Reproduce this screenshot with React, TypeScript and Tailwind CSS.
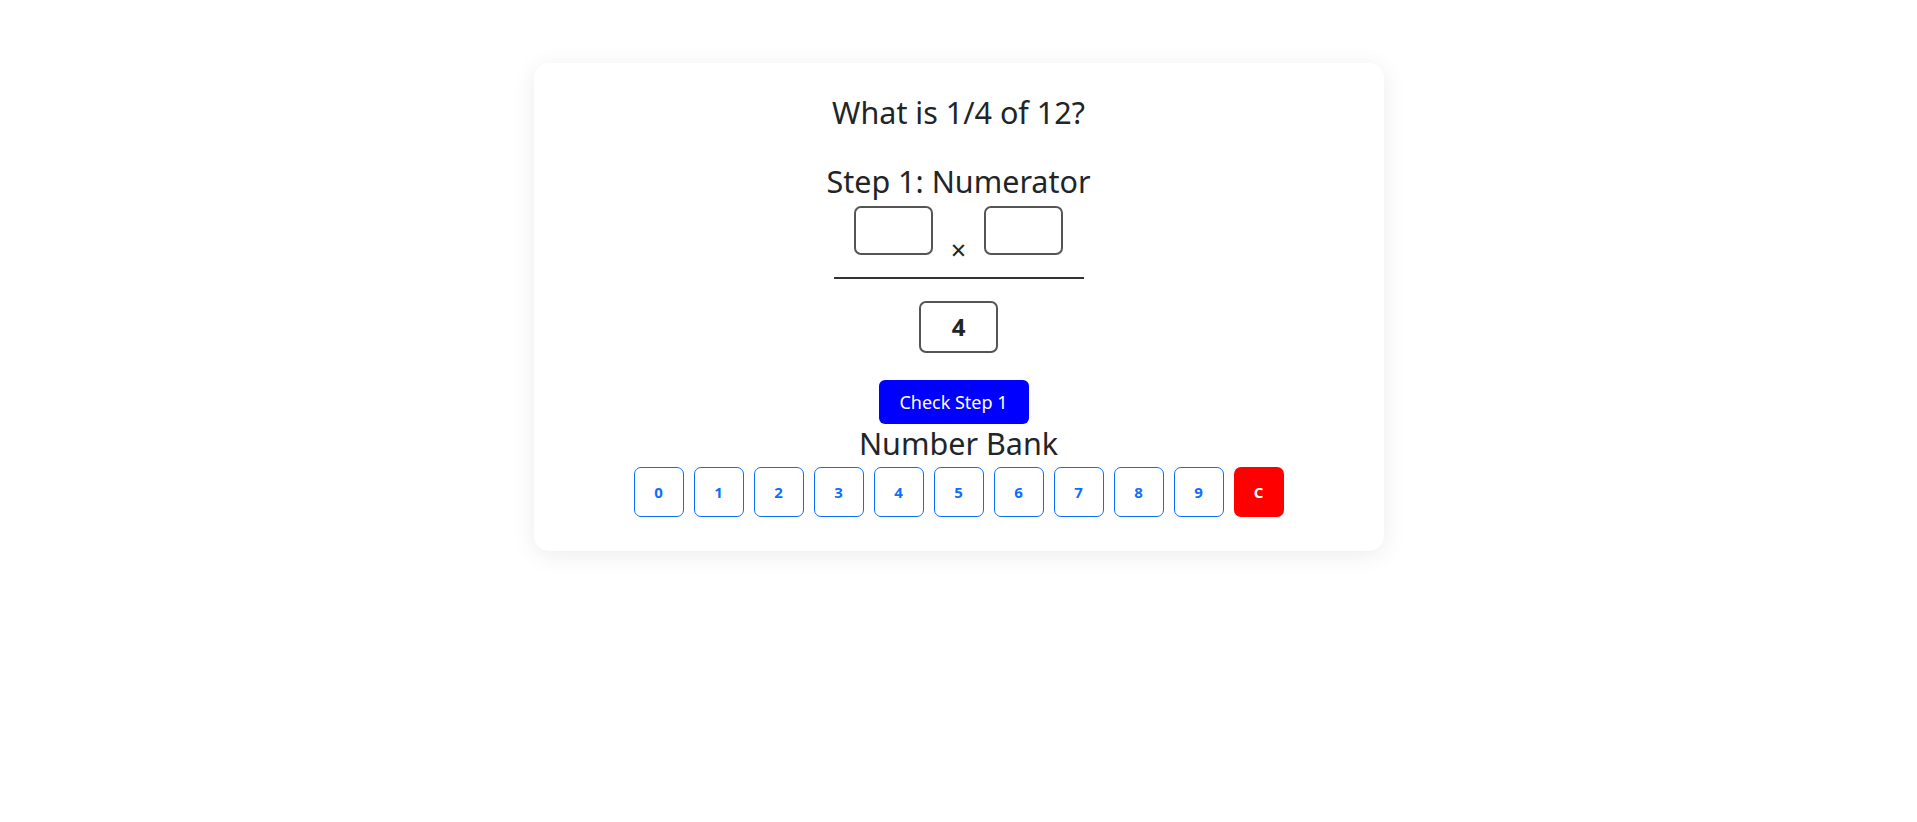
const DIGITS = ["0", "1", "2", "3", "4", "5", "6", "7", "8", "9"];

function AnswerBox({ value, tall }: { value?: string; tall?: boolean }) {
  return (
    <div
      className={`flex w-[79px] items-center justify-center rounded-[7px] border-2 border-[#555] bg-white text-[24px] font-bold text-[#212529] ${
        tall ? "h-[52px]" : "h-[49px]"
      }`}
    >
      {value}
    </div>
  );
}

export default function App() {
  return (
    <div
      className="min-h-screen bg-white pt-[63px] text-[#212529]"
      style={{ fontFamily: '"Segoe UI", "Noto Sans", "Open Sans", sans-serif' }}
    >
      <div className="mx-auto flex w-[850px] flex-col items-center rounded-[15px] bg-white pt-[30px] pb-[34px] shadow-[0_4px_24px_rgba(0,0,0,0.08)]">
        <h2 className="text-[30.5px] leading-[38px]">What is 1/4 of 12?</h2>
        <h2 className="mt-[31px] text-[30.5px] leading-[38px]">Step 1: Numerator</h2>

        <div className="mt-[6px] flex items-end">
          <AnswerBox />
          <span className="mx-[18px] -mb-[8px] text-[27px] leading-none">×</span>
          <AnswerBox />
        </div>
        <div className="mt-[22px] h-[2px] w-[250px] bg-[#333]" />
        <div className="mt-[22px]">
          <AnswerBox value="4" tall />
        </div>

        <button className="mt-[27px] mr-[10px] h-[44px] w-[150px] rounded-[6px] bg-[#0000ff] text-[18px] text-white">
          Check Step 1
        </button>
        <h2 className="text-[30.5px] leading-[38px]">Number Bank</h2>

        <div className="mt-[5px] flex gap-[10px]">
          {DIGITS.map((d) => (
            <button
              key={d}
              className="flex h-[50px] w-[50px] items-center justify-center rounded-[7px] border border-[#0d6efd] bg-white text-[15px] font-bold text-[#0d6efd]"
            >
              {d}
            </button>
          ))}
          <button className="flex h-[50px] w-[50px] items-center justify-center rounded-[7px] bg-[#ff0000] text-[15px] font-bold text-white">
            C
          </button>
        </div>
      </div>
    </div>
  );
}
